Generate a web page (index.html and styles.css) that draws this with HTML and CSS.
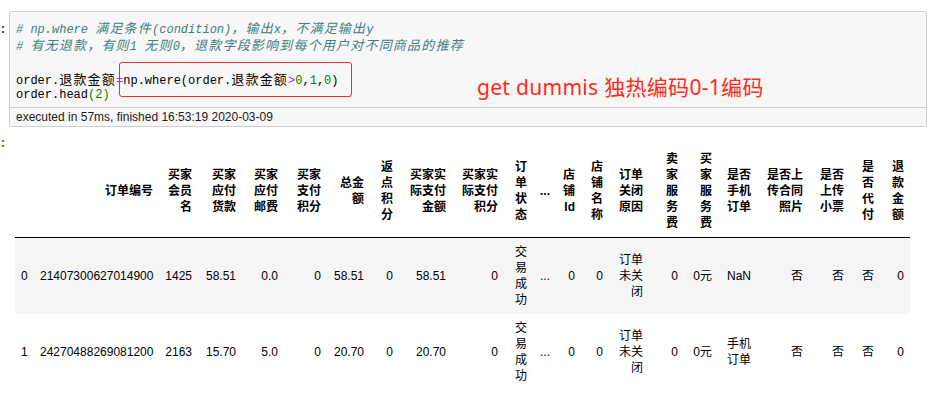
FILE: index.html
```html
<!DOCTYPE html>
<html lang="zh">
<head>
<meta charset="utf-8">
<title>order.head(2)</title>
<link rel="stylesheet" href="styles.css">
</head>
<body>
<div class="cell input-cell">
  <div class="prompt prompt-in">:</div>
  <div class="input-box">
    <div class="code">
      <div class="ln cm"># np.where <span class="zh">满足条件</span>(condition)<span class="zh">，输出</span>x<span class="zh">，不满足输出</span>y</div>
      <div class="ln cm"># <span class="zh">有无退款，有则</span>1 <span class="zh">无则</span>0<span class="zh">，退款字段影响到每个用户对不同商品的推荐</span></div>
      <div class="ln"></div>
      <div class="ln">order.<span class="zh">退款金额</span><span class="op">=</span>np.where(order.<span class="zh">退款金额</span><span class="op">&gt;</span><span class="num">0</span>,<span class="num">1</span>,<span class="num">0</span>)</div>
      <div class="ln">order.head<span class="num">(2)</span></div>
    </div>
    <div class="exec">executed in 57ms, finished 16:53:19 2020-03-09</div>
  </div>
  <div class="red-box"></div>
  <div class="note">get dummis 独热编码0-1编码</div>
</div>

<div class="cell output-cell">
  <div class="prompt prompt-out">:</div>
  <div class="output">
    <table class="df">
      <colgroup>
        <col class="w19"><col class="w125"><col class="w39"><col class="w44"><col class="w42"><col class="w43"><col class="w43"><col class="w29"><col class="w53"><col class="w52"><col class="w29"><col class="w23"><col class="w25"><col class="w28"><col class="w40"><col class="w35"><col class="w34"><col class="w39"><col class="w52"><col class="w41"><col class="w30"><col class="w30">
      </colgroup>
      <thead>
        <tr>
          <th></th>
          <th>订单编号</th>
          <th>买家会员名</th>
          <th>买家应付货款</th>
          <th>买家应付邮费</th>
          <th>买家支付积分</th>
          <th>总金额</th>
          <th>返点积分</th>
          <th>买家实际支付金额</th>
          <th>买家实际支付积分</th>
          <th>订单状态</th>
          <th>...</th>
          <th>店铺Id</th>
          <th>店铺名称</th>
          <th>订单关闭原因</th>
          <th>卖家服务费</th>
          <th>买家服务费</th>
          <th>是否手机订单</th>
          <th>是否上传合同照片</th>
          <th>是否上传小票</th>
          <th>是否代付</th>
          <th>退款金额</th>
        </tr>
      </thead>
      <tbody>
        <tr class="odd">
          <th class="idx">0</th>
          <td>21407300627014900</td>
          <td>1425</td>
          <td>58.51</td>
          <td>0.0</td>
          <td>0</td>
          <td>58.51</td>
          <td>0</td>
          <td>58.51</td>
          <td>0</td>
          <td>交易成功</td>
          <td>...</td>
          <td>0</td>
          <td>0</td>
          <td>订单未关闭</td>
          <td>0</td>
          <td>0元</td>
          <td>NaN</td>
          <td>否</td>
          <td>否</td>
          <td>否</td>
          <td>0</td>
        </tr>
        <tr>
          <th class="idx">1</th>
          <td>24270488269081200</td>
          <td>2163</td>
          <td>15.70</td>
          <td>5.0</td>
          <td>0</td>
          <td>20.70</td>
          <td>0</td>
          <td>20.70</td>
          <td>0</td>
          <td>交易成功</td>
          <td>...</td>
          <td>0</td>
          <td>0</td>
          <td>订单未关闭</td>
          <td>0</td>
          <td>0元</td>
          <td>手机订单</td>
          <td>否</td>
          <td>否</td>
          <td>否</td>
          <td>0</td>
        </tr>
      </tbody>
    </table>
  </div>
</div>
</body>
</html>
```

FILE: styles.css
```css
html, body {
  margin: 0;
  padding: 0;
  background: #ffffff;
  overflow: hidden;
}

body {
  font-family: "Liberation Sans", "Noto Sans CJK SC", sans-serif;
  color: #000;
}

.cell {
  display: flex;
  align-items: flex-start;
}

.input-cell {
  position: relative;
  padding-top: 11px;
}

.prompt {
  width: 10px;
  flex: 0 0 10px;
  font-family: "Liberation Mono", monospace;
  font-weight: bold;
  font-size: 13px;
  line-height: 13px;
  margin-left: -1px;
}

.prompt-in {
  color: #303f9f;
  padding-top: 12px;
}

.prompt-out {
  color: #d84315;
  margin-top: -8px;
}

.input-box {
  width: 916px;
  background: #f7f7f7;
  border: 1px solid #cfcfcf;
  border-radius: 2px;
}

.code {
  padding: 7px 6px 3px 6px;
  font-family: "Liberation Mono", monospace;
  font-size: 12px;
  color: #000;
  border-bottom: 1px solid #cfcfcf;
}

.code .ln {
  height: 17px;
  line-height: 17px;
  white-space: pre;
}

.code .zh {
  font-family: "Noto Sans CJK SC", sans-serif;
  font-size: 13px;
  letter-spacing: 1.2px;
}

.code .cm {
  color: #408080;
  font-style: italic;
}

.code .op {
  color: #aa22ff;
}

.code .num {
  color: #008000;
}

.exec {
  height: 18px;
  line-height: 18px;
  padding-left: 6px;
  font-size: 12px;
  color: #1c1c1c;
}

.red-box {
  position: absolute;
  left: 119px;
  top: 62px;
  width: 231px;
  height: 33px;
  border: 1px solid #e8302c;
  border-radius: 3px;
}

.note {
  position: absolute;
  left: 477px;
  top: 74px;
  font-family: "Noto Sans", "Noto Sans CJK SC", sans-serif;
  font-size: 21px;
  line-height: 26px;
  letter-spacing: 0.3px;
  color: #ff2a1a;
  white-space: nowrap;
}

.output-cell {
  margin-top: 18px;
}

.output {
  padding-left: 6px;
}

.df {
  table-layout: fixed;
  width: 895px;
  border-collapse: separate;
  border-spacing: 0;
  font-size: 12px;
  line-height: 16px;
}

.df th,
.df td {
  padding: 6px;
  text-align: right;
  vertical-align: middle;
}

.df thead th {
  font-weight: bold;
  border-bottom: 1px solid #000;
}

.df tbody th.idx {
  font-weight: normal;
  text-align: left;
}

.df tbody tr.odd {
  background: #f5f5f5;
}

.w19 { width: 19px; }
.w23 { width: 23px; }
.w25 { width: 25px; }
.w28 { width: 28px; }
.w29 { width: 29px; }
.w30 { width: 30px; }
.w34 { width: 34px; }
.w35 { width: 35px; }
.w39 { width: 39px; }
.w40 { width: 40px; }
.w41 { width: 41px; }
.w42 { width: 42px; }
.w43 { width: 43px; }
.w44 { width: 44px; }
.w52 { width: 52px; }
.w53 { width: 53px; }
.w125 { width: 125px; }
```
